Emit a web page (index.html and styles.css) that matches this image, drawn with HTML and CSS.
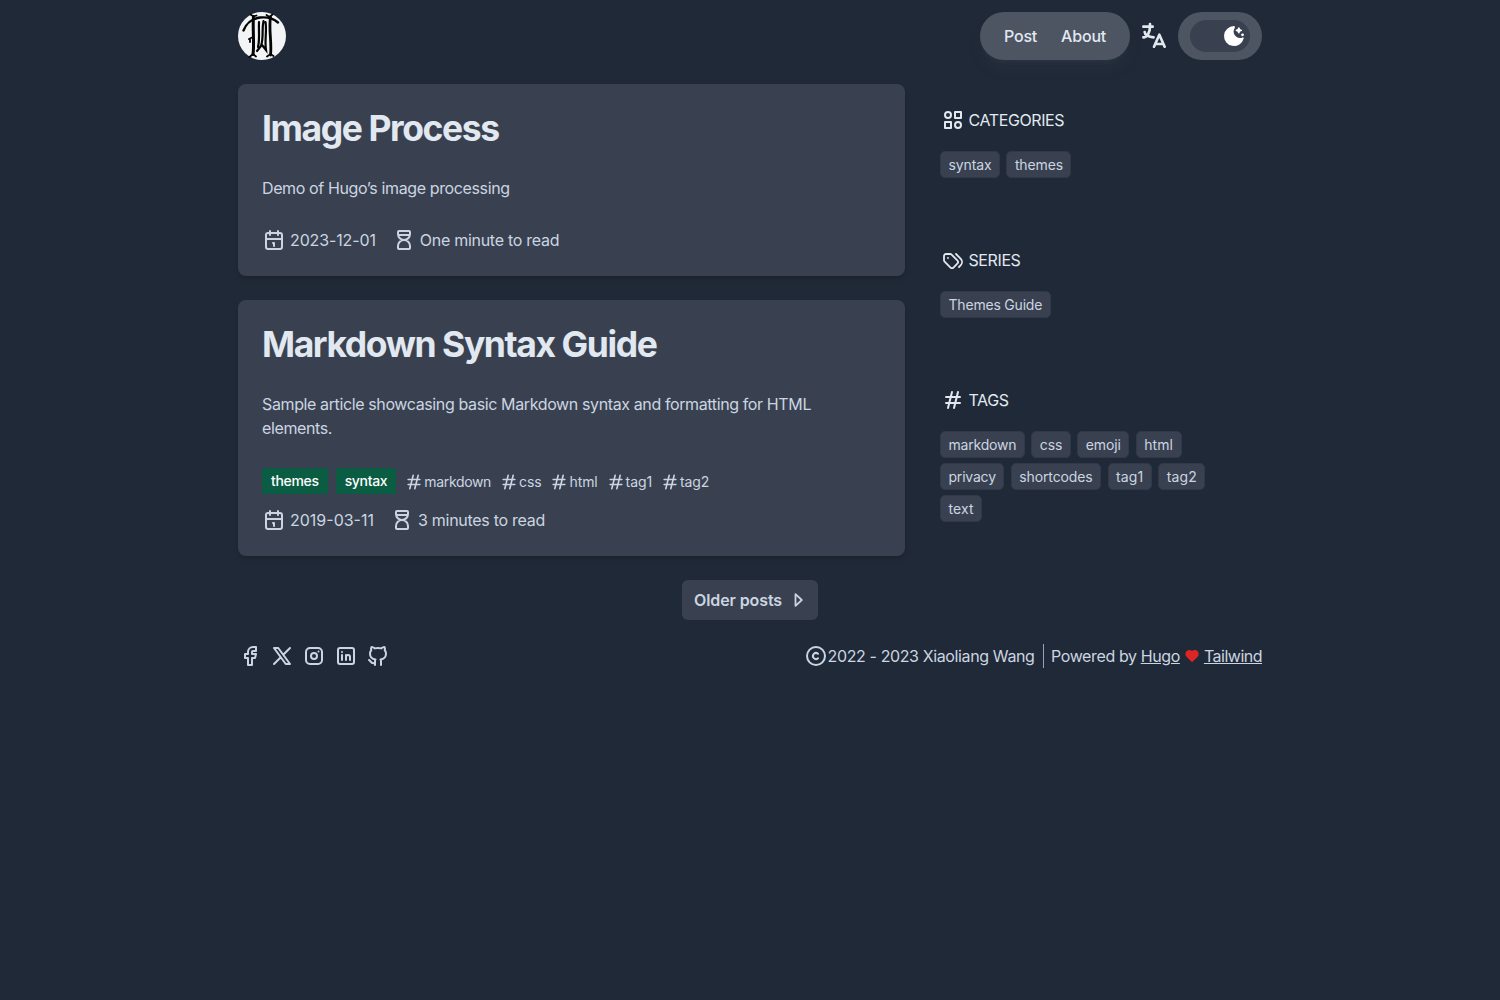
FILE: index.html
```html
<!DOCTYPE html>
<html lang="en">
<head>
<meta charset="utf-8">
<title>Posts</title>
<link rel="stylesheet" href="styles.css">
</head>
<body>
<svg class="sprite" aria-hidden="true">
  <symbol id="calendar" viewBox="0 0 24 24"><path d="M4 7a2 2 0 0 1 2-2h12a2 2 0 0 1 2 2v12a2 2 0 0 1-2 2H6a2 2 0 0 1-2-2zM16 3v4M8 3v4M4 11h16M11 15h1M12 15v3"/></symbol>
  <symbol id="hourglass" viewBox="0 0 24 24"><path d="M6.5 7h11M6 20v-2a6 6 0 1 1 12 0v2a1 1 0 0 1-1 1H7a1 1 0 0 1-1-1zM6 4v2a6 6 0 1 0 12 0V4a1 1 0 0 0-1-1H7a1 1 0 0 0-1 1z"/></symbol>
  <symbol id="hash" viewBox="0 0 24 24"><path d="M5 9h14M5 15h14M11 4L7 20M17 4l-4 16"/></symbol>
</svg>
<div class="container">
  <header class="header">
    <a class="logo" href="#"><svg width="48" height="48" viewBox="0 0 48 48"><circle cx="24" cy="24" r="24" fill="#f3f4f6"/><g fill="none" stroke="#050505" stroke-linecap="round"><path stroke-width="2.400" d="M5.500 18.500C8 12 14 6.500 22 5.500c7-.7 13 .5 18 5"/><path stroke-width="3" d="M15.500 4.500c-1 12 1 28-.5 38"/><path stroke-width="2.800" d="M32.500 5c-2 12 1.500 26 0 38"/><path stroke-width="1.800" d="M12.500 2.500l3 2 3-1M28.500 3l3 2 3-2.500M11.500 45l3.500-3 3 2.500M29 44.500l3.500-2.500 3 2M11 27l3-1.500M12 27v3"/><path stroke-width="2.200" d="M21 10c-.5 9 1 17-1 25M25.500 9c-2 9 .5 16-2.500 25l-4 5M27.500 10c1.500 9-1 18 .5 28l-4-5"/></g></svg></a>
    <div class="actions">
      <nav class="nav"><a href="#">Post</a><a href="#">About</a></nav>
      <button class="language" aria-label="Language"><svg class="icon" width="32" height="32" viewBox="0 0 24 24"><path d="M4 5h7M9 3v2c0 4.418-2.239 8-5 8M5 9c0 2.144 2.952 3.908 6.7 4M12 20l4-9 4 9M19.1 18h-6.2"/></svg></button>
      <button class="theme" aria-label="Theme"><span class="track"><svg width="24" height="24" viewBox="0 0 24 24" fill="#fff"><path d="M12 2a10 10 0 1 0 9.700 12.500c.2-.8-.5-1.200-1.200-.9A6.500 6.500 0 0 1 12.600 4.200c.5-.8.400-2.200-.6-2.200z"/><path d="M16.800 3.800l.8 1.800 1.800.8-1.800.8-.8 1.800-.8-1.800-1.800-.8 1.800-.8z" stroke="#fff" stroke-width="1.200" stroke-linejoin="round"/><circle cx="20.500" cy="10.800" r="1.400"/></svg></span></button>
    </div>
  </header>
  <div class="columns">
    <main class="posts">
      <article class="card">
        <h2>Image Process</h2>
        <p>Demo of Hugo’s image processing</p>
        <div class="meta"><span class="date"><svg class="icon"><use href="#calendar"/></svg>2023-12-01</span><span class="time"><svg class="icon"><use href="#hourglass"/></svg>One minute to read</span></div>
      </article>
      <article class="card">
        <h2>Markdown Syntax Guide</h2>
        <p>Sample article showcasing basic Markdown syntax and formatting for HTML elements.</p>
        <div class="labels"><a class="label">themes</a><a class="label">syntax</a><a class="tag tight"><svg class="icon"><use href="#hash"/></svg>markdown</a><a class="tag"><svg class="icon"><use href="#hash"/></svg>css</a><a class="tag"><svg class="icon"><use href="#hash"/></svg>html</a><a class="tag"><svg class="icon"><use href="#hash"/></svg>tag1</a><a class="tag"><svg class="icon"><use href="#hash"/></svg>tag2</a></div>
        <div class="meta"><span class="date loose"><svg class="icon"><use href="#calendar"/></svg>2019-03-11</span><span class="time"><svg class="icon"><use href="#hourglass"/></svg>3 minutes to read</span></div>
      </article>
    </main>
    <aside class="sidebar">
      <section><h3><svg class="icon" viewBox="0 0 24 24"><path d="M14 4h6v6h-6zM4 14h6v6H4zM14 17a3 3 0 1 0 6 0 3 3 0 1 0-6 0M4 7a3 3 0 1 0 6 0 3 3 0 1 0-6 0"/></svg>CATEGORIES</h3>
        <div class="chips"><a>syntax</a><a>themes</a></div></section>
      <section><h3><svg class="icon thin" viewBox="0 0 24 24"><path d="M3 8v4.172a2 2 0 0 0 .586 1.414l5.710 5.710a2.410 2.410 0 0 0 3.408 0l3.592-3.592a2.410 2.410 0 0 0 0-3.408l-5.710-5.710A2 2 0 0 0 9.172 6H5a2 2 0 0 0-2 2zM18 19l1.592-1.592a4.820 4.820 0 0 0 0-6.816L15 6M7 10h-.01"/></svg>SERIES</h3>
        <div class="chips"><a class="snug">Themes Guide</a></div></section>
      <section><h3><svg class="icon"><use href="#hash"/></svg>TAGS</h3>
        <div class="chips"><a class="snug">markdown</a><a>css</a><a>emoji</a><a class="loose">html</a><a class="snug">privacy</a><a>shortcodes</a><a class="loose">tag1</a><a class="loose">tag2</a><a class="loose">text</a></div></section>
    </aside>
  </div>
  <div class="pager"><a href="#">Older posts<svg class="icon" viewBox="0 0 16 16"><path d="M5.500 2.200v11.600L11.800 8z"/></svg></a></div>
  <footer class="footer">
    <div class="social">
      <svg class="icon" viewBox="0 0 24 24"><path d="M7 10v4h3v7h4v-7h3l1-4h-4V8a1 1 0 0 1 1-1h3V3h-3a5 5 0 0 0-5 5v2H7z"/></svg>
      <svg class="icon" viewBox="0 0 24 24"><path d="M4 4l11.733 16H20L8.267 4zM4 20l6.768-6.768m2.460-2.460L20 4"/></svg>
      <svg class="icon" viewBox="0 0 24 24"><path d="M4 8a4 4 0 0 1 4-4h8a4 4 0 0 1 4 4v8a4 4 0 0 1-4 4H8a4 4 0 0 1-4-4zM9 12a3 3 0 1 0 6 0 3 3 0 1 0-6 0M16.500 7.500v.01"/></svg>
      <svg class="icon" viewBox="0 0 24 24"><path d="M4 6a2 2 0 0 1 2-2h12a2 2 0 0 1 2 2v12a2 2 0 0 1-2 2H6a2 2 0 0 1-2-2zM8 11v5M8 8v.01M12 16v-5M16 16v-3a2 2 0 0 0-4 0"/></svg>
      <svg class="icon" viewBox="0 0 24 24"><path d="M9 19c-4.300 1.400-4.300-2.500-6-3m12 5v-3.500c0-1 .1-1.400-.5-2 2.800-.3 5.500-1.400 5.500-6a4.600 4.600 0 0 0-1.300-3.200 4.200 4.200 0 0 0-.1-3.200s-1.100-.3-3.500 1.300a12.300 12.300 0 0 0-6.200 0C6.500 2.800 5.400 3.100 5.400 3.100a4.200 4.200 0 0 0-.1 3.200A4.600 4.600 0 0 0 4 9.500c0 4.600 2.700 5.700 5.500 6-.6.6-.6 1.200-.5 2V21"/></svg>
    </div>
    <div class="credits">
      <span class="copyright"><svg class="icon" viewBox="0 0 24 24"><path d="M3 12a9 9 0 1 0 18 0 9 9 0 1 0-18 0M14 9.750a3.016 3.016 0 0 0-4.163.173 2.993 2.993 0 0 0 0 4.154A3.016 3.016 0 0 0 14 14.250"/></svg><span>2022 - 2023 Xiaoliang Wang</span></span>
      <span class="powered"><span>Powered by</span><a href="#">Hugo</a><svg class="heart" width="16" height="16" viewBox="0 0 24 24"><path d="M6.979 3.074a6 6 0 0 1 4.988 1.425l.037.033.034-.03a6 6 0 0 1 4.733-1.440l.246.036a6 6 0 0 1 3.364 10.008l-.18.185-.048.041-7.450 7.379a1 1 0 0 1-1.313.082l-.094-.082-7.493-7.422A6 6 0 0 1 6.979 3.074z"/></svg><a class="tight" href="#">Tailwind</a></span>
    </div>
  </footer>
</div>
</body>
</html>
```
FILE: styles.css
```css
*{box-sizing:border-box}
body{margin:0;background:#202937;color:#cbd5e1;font:16px/24px Inter,sans-serif;letter-spacing:-.28px}
h2,h3,p{margin:0}
a{color:inherit}
button{border:0;padding:0;background:none;color:inherit}
.sprite{display:none}
.icon{width:24px;height:24px;flex:none;fill:none;stroke:currentColor;stroke-width:2;stroke-linecap:round;stroke-linejoin:round}
.icon.thin{stroke-width:1.8}
.container{width:1024px;margin:0 auto}
.header{display:flex;justify-content:space-between;padding:12px 0 24px}
.logo,.logo svg{display:block;height:48px}
.actions{display:flex;align-items:center;gap:8px;color:#e2e8f0}
.nav{display:flex;align-items:center;gap:24px;width:150px;height:48px;padding:0 24px;border-radius:24px;background:#4d5562;box-shadow:0 10px 15px -3px #4d556226,0 4px 6px -4px #4d556240;font-weight:500;letter-spacing:-.2px}
.nav a{text-decoration:none}
.language{width:32px;height:32px}
.language .icon{display:block;width:32px;height:32px}
.theme{width:84px;height:48px;border-radius:24px;background:#4d5562;padding:8px 12px}
.track{display:flex;align-items:center;justify-content:flex-end;width:60px;height:32px;padding-right:4px;border-radius:16px;background:#394150}
.columns{display:grid;grid-template-columns:667px 322px;gap:35px}
.posts{display:grid;gap:24px}
.card{padding:24px;border-radius:8px;background:#394150;box-shadow:0 4px 6px -1px #0000001a,0 2px 4px -2px #0000001a}
.card h2{padding-top:1px;margin-bottom:27px;font-size:35.5px;line-height:40px;font-weight:700;color:#e2e8f0;letter-spacing:-1.42px}
.card p{margin-bottom:28px;letter-spacing:-.38px}
.meta{display:flex;gap:16px;height:24px}
.date,.time{display:flex;gap:4px;white-space:nowrap}
.date{letter-spacing:-.13px}
.date.loose{letter-spacing:0}
.labels{display:flex;align-items:center;height:26px;margin-bottom:14px;font-size:14px;line-height:20px;letter-spacing:-.1px}
.label{height:26px;padding:3px 9px;margin-right:8px;border-radius:2px;background:#0a5d43;color:#fff;font-weight:500;letter-spacing:-.33px}
.tag{display:flex;align-items:center;margin:2px 8px 0 0}
.tag .icon{width:20px;height:20px}
.tag.tight{letter-spacing:-.34px}
.chips .snug{letter-spacing:-.2px}
.chips .loose{letter-spacing:.1px}
.sidebar{padding-top:24px}
.sidebar section{min-height:140px}
.sidebar h3{display:flex;gap:3.5px;padding-left:1px;font-size:16px;font-weight:400;color:#e2e8f0;letter-spacing:-.4px}
.chips{display:flex;flex-wrap:wrap;gap:5px 6.5px;width:290px;margin-top:19px}
.chips a{height:27px;padding:3px 7.5px;border:1px solid #303948;border-radius:5px;background:#394150;font-size:14px;line-height:20px;letter-spacing:-.13px}
.pager{display:flex;justify-content:center;padding:24px 0}
.pager a{display:flex;align-items:center;gap:8px;width:136px;height:40px;padding:0 8px 0 12px;border-radius:6px;background:#394150;font-weight:600;text-decoration:none;white-space:nowrap;letter-spacing:-.1px}
.pager .icon{width:16px;height:16px;stroke-width:1.8}
.footer{display:flex;justify-content:space-between;height:24px}
.social{display:flex;gap:8px}
.credits{display:flex;white-space:nowrap;letter-spacing:-.38px}
.copyright{display:flex;padding-right:8px;border-right:1px solid #94a3b8}
.copyright .icon{margin-right:-.2px}
.powered{display:flex;align-items:center;gap:4px;padding-left:7.5px}
.powered .tight{letter-spacing:-.5px}
.heart{fill:#dc2626}
```
